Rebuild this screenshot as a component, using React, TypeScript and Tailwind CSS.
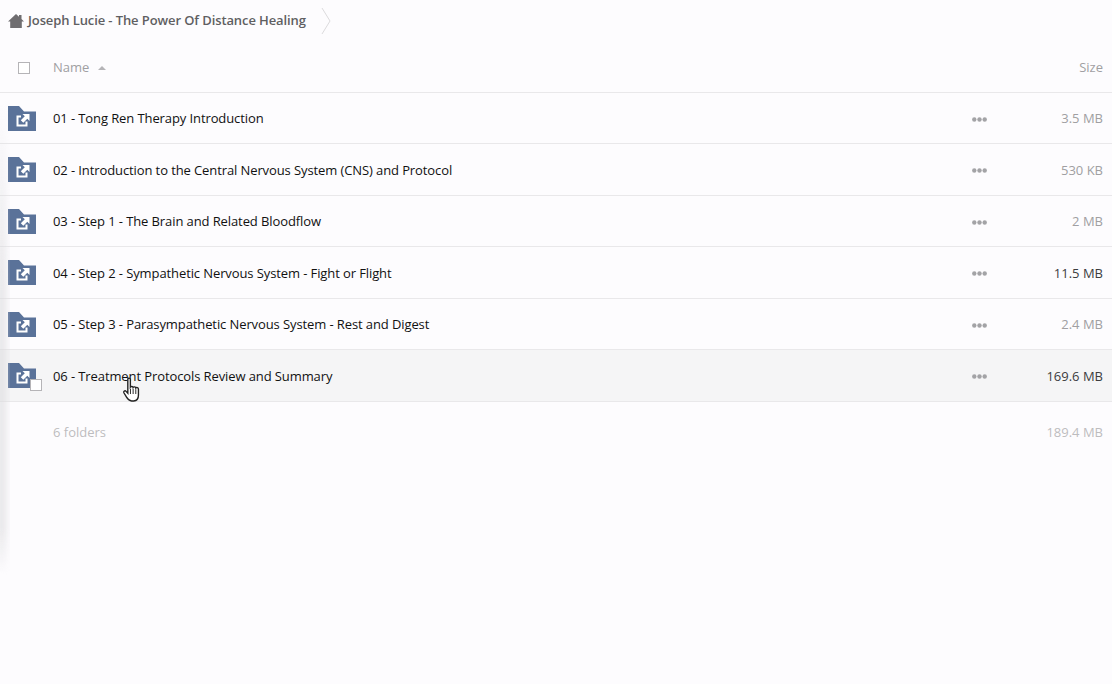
import React from 'react'

const ROWS = [
  { name: '01 - Tong Ren Therapy Introduction', size: '3.5 MB' },
  { name: '02 - Introduction to the Central Nervous System (CNS) and Protocol', size: '530 KB' },
  { name: '03 - Step 1 - The Brain and Related Bloodflow', size: '2 MB' },
  { name: '04 - Step 2 - Sympathetic Nervous System - Fight or Flight', size: '11.5 MB', dark: true },
  { name: '05 - Step 3 - Parasympathetic Nervous System - Rest and Digest', size: '2.4 MB' },
  { name: '06 - Treatment Protocols Review and Summary', size: '169.6 MB', dark: true, hover: true },
]

const FolderIcon = () => (
  <svg width="28" height="25" viewBox="0 0 28 25" className="shrink-0">
    <path d="M0 0H11L16 5.500H28V25H0Z" fill="#5a7299" />
    <path d="M8.500 9.500H13V11.500H10.500V18.500H17.500V15.500H19.500V20.500H8.500Z" fill="#fff" />
    <path d="M14.500 8H21.500V15L19.300 12.800L15.300 16.800L12.800 14.300L16.800 10.300Z" fill="#fff" />
  </svg>
)

const Dots = () => (
  <svg width="15" height="5" viewBox="0 0 15 5">
    <circle cx="2.300" cy="2.500" r="2.200" fill="#a3a3a6" />
    <circle cx="7.500" cy="2.500" r="2.200" fill="#a3a3a6" />
    <circle cx="12.700" cy="2.500" r="2.200" fill="#a3a3a6" />
  </svg>
)

const HandCursor = () => (
  <svg width="18" height="25" viewBox="0 0 16 23.500" className="absolute left-[122px] top-[27px]">
    <path
      d="M5 2C5 .7 7.400 .7 7.400 2V9.500C8 8.700 9.800 8.700 10 9.800C10.600 9 12.300 9.200 12.500 10.300C13.200 9.600 15 9.800 15 11.500V17C15 20 13.500 22.500 10.500 22.500H8.500C6 22.500 5 21 3.800 19L1.300 14.800C.6 13.500 2.300 12.300 3.400 13.500L5 15.200Z"
      fill="#fff"
      stroke="#222"
      strokeWidth="1.300"
    />
    <path d="M7.500 11V16M10 11V16M12.500 11.500V16" stroke="#222" strokeWidth="0.900" fill="none" />
  </svg>
)

export default function App() {
  return (
    <div
      className="relative w-[1112px] h-[684px] overflow-hidden bg-[#fdfcfe] text-[13px]"
      style={{ fontFamily: '"Open Sans", sans-serif' }}
    >
      {/* Breadcrumb */}
      <div className="flex items-center h-[41px] pl-2">
        <svg width="16" height="14" viewBox="0 0 16 14" className="shrink-0">
          <path d="M8 0L11 2.700V1H13.500V5L16 7.400H13.800V14H2.200V7.400H0Z" fill="#6f6d70" />
        </svg>
        <span className="ml-1 font-semibold tracking-[-0.1px] text-[#5f5f62]">Joseph Lucie - The Power Of Distance Healing</span>
        <svg width="10" height="28" viewBox="0 0 10 28" className="ml-[15px] shrink-0">
          <path d="M1 1L9 14L1 27" fill="none" stroke="#dcdbdd" />
        </svg>
      </div>

      {/* Table header */}
      <div className="flex items-center h-[52px] pt-[2px] border-b border-[#e9e8ea] pl-[18px] pr-[9px] text-[#a09fa2]">
        <div className="w-3 h-3 border border-[#b5b4b7] bg-white" />
        <span className="ml-[23px]">Name</span>
        <span className="ml-[9px] w-0 h-0 border-x-4 border-x-transparent border-b-[4px] border-b-[#b5b4b7]" />
        <span className="ml-auto">Size</span>
      </div>

      {/* Folders */}
      <div>
        {ROWS.map((row) => (
          <div
            key={row.name}
            className={`relative flex items-center odd:h-[51px] even:h-[52px] border-b border-[#e9e8ea] pl-2 pr-[9px] ${row.hover ? 'bg-[#f5f5f6]' : ''}`}
          >
            <FolderIcon />
            {row.hover && (
              <div className="absolute left-[30px] top-[29px] w-3 h-3 border border-[#b5b4b7] bg-white" />
            )}
            <span className="ml-[17px] pt-[2px] tracking-[-0.1px] text-[#111]">{row.name}</span>
            <span className="absolute left-[972px] top-[24px] flex">
              <Dots />
            </span>
            <span className={`ml-auto pt-[2px] ${row.dark ? 'text-[#3c3c3e]' : 'text-[#a09fa2]'}`}>{row.size}</span>
            {row.hover && <HandCursor />}
          </div>
        ))}
      </div>

      {/* Summary */}
      <div className="flex items-center h-[60px] pt-px pl-[53px] pr-[9px] text-[#bdbcbf]">
        <span>6 folders</span>
        <span className="ml-auto">189.4 MB</span>
      </div>

      {/* Sidebar shadow */}
      <div className="absolute -left-[2px] top-[100px] w-[12px] h-[475px] bg-gradient-to-r from-[#dcdbde] to-transparent blur-[3px] [mask-image:linear-gradient(to_bottom,transparent,black_40%,black_90%,transparent)]" />
    </div>
  )
}
